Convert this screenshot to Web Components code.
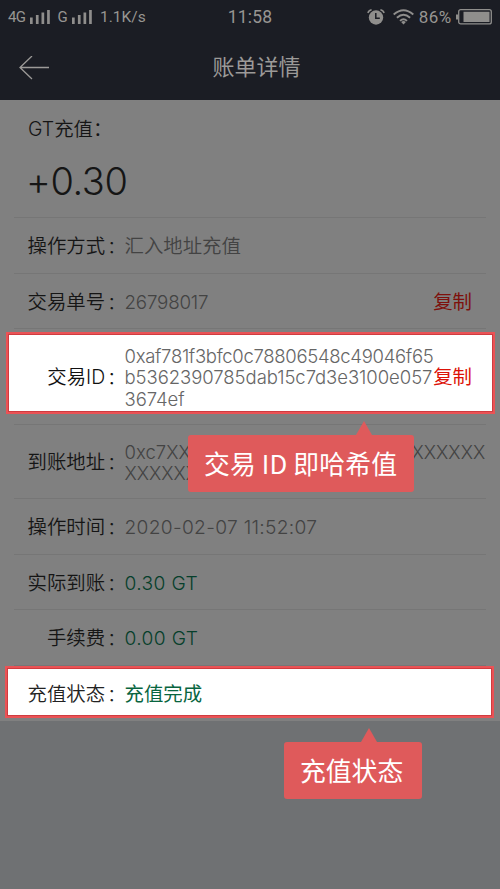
<!DOCTYPE html>
<html lang="zh-CN">
<head>
<meta charset="utf-8">
<title>账单详情</title>
<style>
html,body{margin:0;height:100%}
body{background:#6f7173;font-family:Roboto,"Noto Sans CJK SC",sans-serif;overflow:hidden}
</style>
</head>
<body>
<bill-page></bill-page>
<script>
const define = (name, html) => {
  const t = document.createElement('template');
  t.innerHTML = html;
  customElements.define(name, class extends HTMLElement {
    constructor() {
      super();
      this.attachShadow({mode: 'open'}).append(t.content.cloneNode(true));
    }
  });
};

define('signal-bars', `<style>:host{display:block;width:20px;height:15px}svg{display:block}</style>
<svg width="20" height="15" fill="#8f8e8c"><path d="M0 7.500h2.700v6.500H0zM5.900 5h2.700v9H5.900zM11.500 2.500h2.700V14h-2.700zM17.100 0h2.700v14h-2.700z"/></svg>`);

define('status-bar', `<style>
:host{display:grid;grid-template-columns:1fr auto 1fr;align-items:center;height:34px;padding:0 8px 0 8px;box-sizing:border-box;color:#979592;font-size:15.500px;line-height:34px}
.l,.r{display:flex;align-items:center}.r{justify-content:flex-end}
.g{font-size:15px;letter-spacing:-.7px}.c{font-size:17.500px;letter-spacing:.2px}
svg{display:block}
</style>
<div class="l"><span class="g" style="width:17px">4G</span><signal-bars style="margin-left:5px"></signal-bars><span class="g" style="margin-left:7.500px;width:9px">G</span><signal-bars style="margin-left:5.500px"></signal-bars><span style="margin-left:8px">1.1K/s</span></div>
<div class="c">11:58</div>
<div class="r">
<svg width="18" height="17" viewBox="0 0 18 17"><circle cx="9" cy="8.500" r="7.200" fill="#8f8e8c"/><path d="M.9 4Q1.700 1.300 4.600 .8M17.100 4Q16.300 1.300 13.400 .8" fill="none" stroke="#8f8e8c" stroke-width="1.500"/><path d="M8.800 4V9.300H12.800" fill="none" stroke="#1b1d24" stroke-width="1.500"/></svg>
<svg style="margin-left:7.500px" width="21" height="16" viewBox="0 0 21 16"><g fill="none" stroke="#8f8e8c" stroke-width="1.900"><path d="M.7 5.500Q10.500-3.200 20.300 5.500M3.900 8.800Q10.500 2.800 17.100 8.800M7 11.900Q10.500 8.700 14 11.900"/></g><path d="M8.100 13Q10.500 11 12.900 13L10.500 15.500z" fill="#8f8e8c"/></svg>
<span style="margin-left:5px;font-size:17px;letter-spacing:.4px">86%</span>
<svg style="margin-left:4.500px" width="36" height="16" viewBox="0 0 36 16"><rect x="2.700" y=".7" width="32.600" height="14.200" rx="2" fill="none" stroke="#8f8e8c" stroke-width="1.300"/><path d="M7.500 2.700h26v10.200h-26zM0 5.500h2v5H0z" fill="#8f8e8c"/></svg>
</div>`);

define('nav-bar', `<style>
:host{display:grid;grid-template-columns:60px 1fr 47px;height:66px;align-items:center;color:#9c9a98;font-size:22px;text-align:center}
svg{display:block;margin-left:19px}span{line-height:66px;padding-top:1px}
</style>
<svg width="31" height="24" fill="none" stroke="#9c9a98" stroke-width="1.300"><path d="M13 0L1 11.500L13 23M1 11.500H30"/></svg><span><slot></slot></span>`);

define('bill-amount', `<style>
:host{display:block;height:117px;box-sizing:border-box;padding:14.500px 28px 0;color:#151515;font-family:Inter,"Noto Sans CJK SC",sans-serif;font-weight:300}
.t{font-size:19.400px;line-height:28px;font-weight:350}.n{font-size:38px;line-height:48px;margin:14.500px 0 0 -2px;letter-spacing:-.4px}
</style><div class="t"><slot name="title"></slot></div><div class="n"><slot></slot></div>`);

define('bill-row', `<style>
:host{display:flex;position:relative;align-items:center;box-sizing:border-box;height:var(--h,55.500px);padding:4px 28px 0 14px;font-family:Inter,"Noto Sans CJK SC",sans-serif;font-size:19.400px;line-height:21.300px;font-weight:300}
:host::before{content:"";position:absolute;left:14px;right:14px;top:0;height:1px;background:#767676}
.label{display:flex;justify-content:flex-end;width:110.500px;color:var(--lc,#151515);flex:none;font-weight:350;white-space:nowrap}
.colon{width:17px;margin-left:2.400px;font-size:17px;padding-top:1px;line-height:20.300px}
.value{color:var(--vc,#434343);flex:1 1 0;min-width:0;white-space:pre;font-size:var(--fs,19.200px);letter-spacing:var(--ls,.1px);font-weight:var(--fw,350)}
.label,.value,.act{position:relative}
.act{color:var(--ac,#7e100c);font-weight:400;flex:none}
</style>
<slot name="frame"></slot><div class="label"><slot name="label"></slot><span class="colon">：</span></div><div class="value"><slot></slot></div><div class="act"><slot name="action"></slot></div><slot name="tip"></slot>`);

define('focus-frame', `<style>
:host{display:block;position:absolute;box-sizing:border-box;background:#fff;border:2px solid #ea5356;box-shadow:inset 0 0 0 1px #cf3c40}
</style>`);

define('call-out', `<style>
:host{display:block;position:absolute;z-index:3;box-sizing:border-box;height:57px;padding-left:16px;border-radius:3px;background:#df5a5b;color:#fff;font:400 25.800px/55px "Noto Sans CJK SC",sans-serif;white-space:nowrap}
:host::before{content:"";position:absolute;left:var(--tip);top:-14px;border:8px solid transparent;border-top:0;border-bottom:14px solid #df5a5b}
</style><slot></slot>`);

define('bill-page', `<style>
:host{display:block;height:889px;width:500px}
header{background:#1b1d24;height:100px}
main{background:#808080;height:620.500px}
.green{--vc:#063f2b}
.han{--fs:19.400px;--ls:0;--fw:400}
</style>
<header><status-bar></status-bar><nav-bar>账单详情</nav-bar></header>
<main>
<bill-amount><span slot="title">GT充值：</span>+0.30</bill-amount>
<bill-row class="han" style="--fw:350"><span slot="label">操作方式</span>汇入地址充值</bill-row>
<bill-row style="--fs:18.800px;--ls:-.2px"><span slot="label">交易单号</span>26798017<span slot="action">复制</span></bill-row>
<bill-row style="--h:96px;--vc:#666;--ac:#dc1208;--lc:#111;--fs:18.500px"><focus-frame slot="frame" style="left:6px;top:3.500px;width:489px;height:82px"></focus-frame><span slot="label">交易ID</span><span style="letter-spacing:-.3px">0xaf781f3bfc0c78806548c49046f65
</span><span style="letter-spacing:-.05px">b5362390785dab15c7d3e3100e057
3674ef</span><span slot="action">复制</span><call-out slot="tip" style="left:188px;top:107px;width:226px;letter-spacing:.15px;--tip:168px">交易 ID 即哈希值</call-out></bill-row>
<bill-row style="--h:74px;--fs:18.500px;--ls:.03px"><span slot="label">到账地址</span>0xc7XXXXXXXXXXXXXXXXXXXXXXXXXX
XXXXXXXXXX</bill-row>
<bill-row style="--ls:.3px"><span slot="label">操作时间</span>2020-02-07 11:52:07</bill-row>
<bill-row class="green" style="--ls:.35px"><span slot="label">实际到账</span>0.30 GT</bill-row>
<bill-row class="green" style="--ls:.35px"><span slot="label">手续费</span>0.00 GT</bill-row>
<bill-row class="han" style="--vc:#08653f;--lc:#222"><focus-frame slot="frame" style="left:5px;top:1px;width:489px;height:52px"></focus-frame><span slot="label">充值状态</span>充值完成<call-out slot="tip" style="left:284px;top:77px;width:138px;--tip:77px">充值状态</call-out></bill-row>
</main>`);
</script>
</body>
</html>
